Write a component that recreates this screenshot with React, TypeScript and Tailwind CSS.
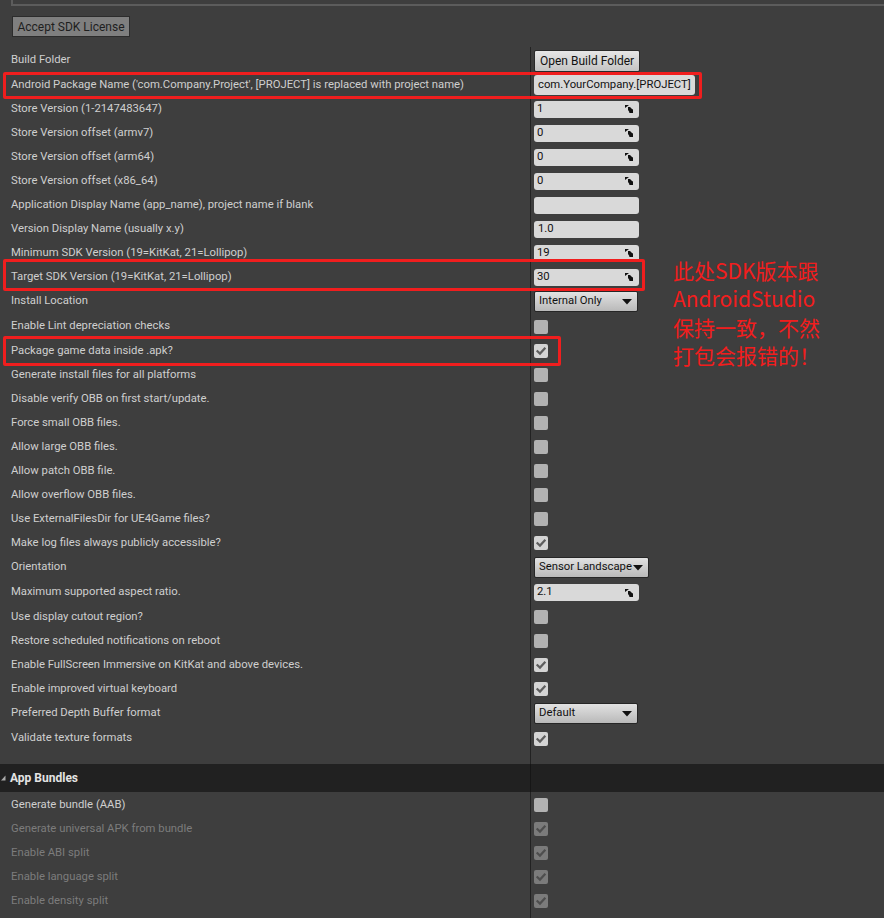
import React from "react";

type W =
  | { t: "button"; v: string }
  | { t: "wide"; v: string }
  | { t: "spin"; v: string }
  | { t: "text"; v: string }
  | { t: "drop"; v: string; w: number }
  | { t: "check"; c: boolean; d?: boolean };

type Row = { label: string; h: number; w: W; dim?: boolean };

const rows: Row[] = [
  { label: "Build Folder", h: 25, w: { t: "button", v: "Open Build Folder" } },
  { label: "Android Package Name ('com.Company.Project', [PROJECT] is replaced with project name)", h: 24, w: { t: "wide", v: "com.YourCompany.[PROJECT]" } },
  { label: "Store Version (1-2147483647)", h: 24, w: { t: "spin", v: "1" } },
  { label: "Store Version offset (armv7)", h: 24, w: { t: "spin", v: "0" } },
  { label: "Store Version offset (arm64)", h: 24, w: { t: "spin", v: "0" } },
  { label: "Store Version offset (x86_64)", h: 24, w: { t: "spin", v: "0" } },
  { label: "Application Display Name (app_name), project name if blank", h: 24, w: { t: "text", v: "" } },
  { label: "Version Display Name (usually x.y)", h: 24, w: { t: "text", v: "1.0" } },
  { label: "Minimum SDK Version (19=KitKat, 21=Lollipop)", h: 24, w: { t: "spin", v: "19" } },
  { label: "Target SDK Version (19=KitKat, 21=Lollipop)", h: 24, w: { t: "spin", v: "30" } },
  { label: "Install Location", h: 25, w: { t: "drop", v: "Internal Only", w: 104 } },
  { label: "Enable Lint depreciation checks", h: 25, w: { t: "check", c: false } },
  { label: "Package game data inside .apk?", h: 24, w: { t: "check", c: true } },
  { label: "Generate install files for all platforms", h: 24, w: { t: "check", c: false } },
  { label: "Disable verify OBB on first start/update.", h: 24, w: { t: "check", c: false } },
  { label: "Force small OBB files.", h: 24, w: { t: "check", c: false } },
  { label: "Allow large OBB files.", h: 24, w: { t: "check", c: false } },
  { label: "Allow patch OBB file.", h: 24, w: { t: "check", c: false } },
  { label: "Allow overflow OBB files.", h: 24, w: { t: "check", c: false } },
  { label: "Use ExternalFilesDir for UE4Game files?", h: 24, w: { t: "check", c: false } },
  { label: "Make log files always publicly accessible?", h: 24, w: { t: "check", c: true } },
  { label: "Orientation", h: 25, w: { t: "drop", v: "Sensor Landscape", w: 115 } },
  { label: "Maximum supported aspect ratio.", h: 25, w: { t: "spin", v: "2.1" } },
  { label: "Use display cutout region?", h: 24, w: { t: "check", c: false } },
  { label: "Restore scheduled notifications on reboot", h: 24, w: { t: "check", c: false } },
  { label: "Enable FullScreen Immersive on KitKat and above devices.", h: 24, w: { t: "check", c: true } },
  { label: "Enable improved virtual keyboard", h: 24, w: { t: "check", c: true } },
  { label: "Preferred Depth Buffer format", h: 25, w: { t: "drop", v: "Default", w: 104 } },
  { label: "Validate texture formats", h: 25, w: { t: "check", c: true } },
];

const bundleRows: Row[] = [
  { label: "Generate bundle (AAB)", h: 24, w: { t: "check", c: false } },
  { label: "Generate universal APK from bundle", h: 24, w: { t: "check", c: true, d: true }, dim: true },
  { label: "Enable ABI split", h: 24, w: { t: "check", c: true, d: true }, dim: true },
  { label: "Enable language split", h: 24, w: { t: "check", c: true, d: true }, dim: true },
  { label: "Enable density split", h: 24, w: { t: "check", c: true, d: true }, dim: true },
];

const SpinIcon = () => (
  <svg width="9" height="8" viewBox="0 0 9 8" className="shrink-0">
    <path d="M0 0H4L0 3Z" fill="#111" />
    <path d="M3 2H5L8 5V8H5L3 5Z" fill="#111" />
    <path d="M8 4V8H4Z" fill="#111" />
  </svg>
);

const Arrow = () => (
  <svg width="10" height="6" viewBox="0 0 10 6" className="shrink-0">
    <path d="M0 0H10L5 5.5Z" fill="#111" />
  </svg>
);

const Check = ({ color }: { color: string }) => (
  <svg width="12" height="12" viewBox="0 0 12 12">
    <path d="M2.5 6.2L5 8.6L9.6 3.6" stroke={color} strokeWidth="2.2" fill="none" strokeLinecap="square" />
  </svg>
);

function Widget({ w }: { w: W }) {
  switch (w.t) {
    case "button":
      return (
        <div className="h-[22px] px-[5px] flex items-center rounded-[2px] border border-[#2a2a2a] bg-gradient-to-b from-[#e6e6e6] to-[#c4c4c4] text-[12px] text-[#111]">
          {w.v}
        </div>
      );
    case "wide":
      return (
        <div className="h-[20px] px-[4px] flex items-center rounded-[3px] bg-[#d9d9d9] text-[11.3px] text-[#111]">
          {w.v}
        </div>
      );
    case "spin":
      return (
        <div className="h-[17px] w-[105px] pl-[3px] pr-[5px] flex items-center justify-between rounded-[3px] bg-[#d9d9d9] text-[11.3px] text-[#111]">
          <span>{w.v}</span>
          <SpinIcon />
        </div>
      );
    case "text":
      return (
        <div className="h-[17px] w-[105px] px-[4px] flex items-center rounded-[3px] bg-[#d9d9d9] text-[11.3px] text-[#111]">
          {w.v}
        </div>
      );
    case "drop":
      return (
        <div
          className="h-[21px] pl-[4px] pr-[5px] flex items-center justify-between rounded-[2px] border border-[#262626] bg-gradient-to-b from-[#e2e2e2] to-[#b9b9b9] text-[11.3px] text-[#111]"
          style={{ width: w.w }}
        >
          <span>{w.v}</span>
          <Arrow />
        </div>
      );
    case "check":
      if (w.d) {
        return (
          <div className="w-[14px] h-[14px] rounded-[2px] bg-[#7b7b7b] flex items-center justify-center">
            <Check color="#4e4e4e" />
          </div>
        );
      }
      return (
        <div className={`w-[14px] h-[14px] rounded-[2px] flex items-center justify-center ${w.c ? "bg-[#d4d4d4]" : "bg-[#b2b2b2]"}`}>
          {w.c && <Check color="#5e5e5e" />}
        </div>
      );
  }
}

function PropRow({ r }: { r: Row }) {
  return (
    <div className="flex" style={{ height: r.h }}>
      <div className={`w-[531px] shrink-0 pl-[11px] pt-[2px] flex items-center border-r border-[#222] text-[11.3px] ${r.dim ? "text-[#7c7c7c]" : "text-[#cfcfcf]"}`}>
        {r.label}
      </div>
      <div className="flex-1 pl-[3px] pt-[2px] flex items-center">
        <Widget w={r.w} />
      </div>
    </div>
  );
}

export default function App() {
  return (
    <div
      className="relative w-[884px] h-[918px] overflow-hidden bg-[#3e3e3e]"
      style={{ fontFamily: "Roboto, 'Liberation Sans', sans-serif" }}
    >
      <div className="h-[6px] ml-[11px] border-l-2 border-b-2 border-[#5c5c5c]" />
      <div className="pl-[12px] pt-[10px] pb-[10px]">
        <div className="h-[21px] w-[118px] flex items-center justify-center border border-[#2c2c2c] bg-[#7f7f7f] text-[12px] text-[#1e1e1e]">
          Accept SDK License
        </div>
      </div>
      {rows.map((r, i) => (
        <PropRow key={i} r={r} />
      ))}
      <div className="flex h-[14px]">
        <div className="w-[531px] border-r border-[#222]" />
      </div>
      <div className="flex h-[28px] bg-[#212121]">
        <div className="w-[531px] shrink-0 flex items-center border-r border-[#161616]">
          <svg width="5" height="6" viewBox="0 0 5 6" className="ml-[1px] mr-[4px]">
            <path d="M4.5 0.5V5.5H0Z" fill="#aaa" />
          </svg>
          <span className="text-[12px] font-bold text-[#e4e4e4]">App Bundles</span>
        </div>
      </div>
      {bundleRows.map((r, i) => (
        <PropRow key={i} r={r} />
      ))}
      <div className="flex h-[10px]">
        <div className="w-[531px] border-r border-[#222]" />
      </div>

      {/* red annotation boxes */}
      <div className="absolute left-[3px] top-[72px] w-[699px] h-[27px] border-[3px] border-[#f01e1e] rounded-[2px]" />
      <div className="absolute left-[3px] top-[259px] w-[642px] h-[32px] border-[3px] border-[#f01e1e] rounded-[2px]" />
      <div className="absolute left-[3px] top-[336px] w-[558px] h-[30px] border-[3px] border-[#f01e1e] rounded-[2px]" />

      <div
        className="absolute left-[673px] top-[256px] text-[21px] leading-[28.3px] text-[#f21d1d]"
        style={{ fontFamily: "'Noto Sans CJK SC', 'Noto Sans', sans-serif" }}
      >
        <div>此处SDK版本跟</div>
        <div>AndroidStudio</div>
        <div>保持一致，不然</div>
        <div>打包会报错的！</div>
      </div>
    </div>
  );
}
